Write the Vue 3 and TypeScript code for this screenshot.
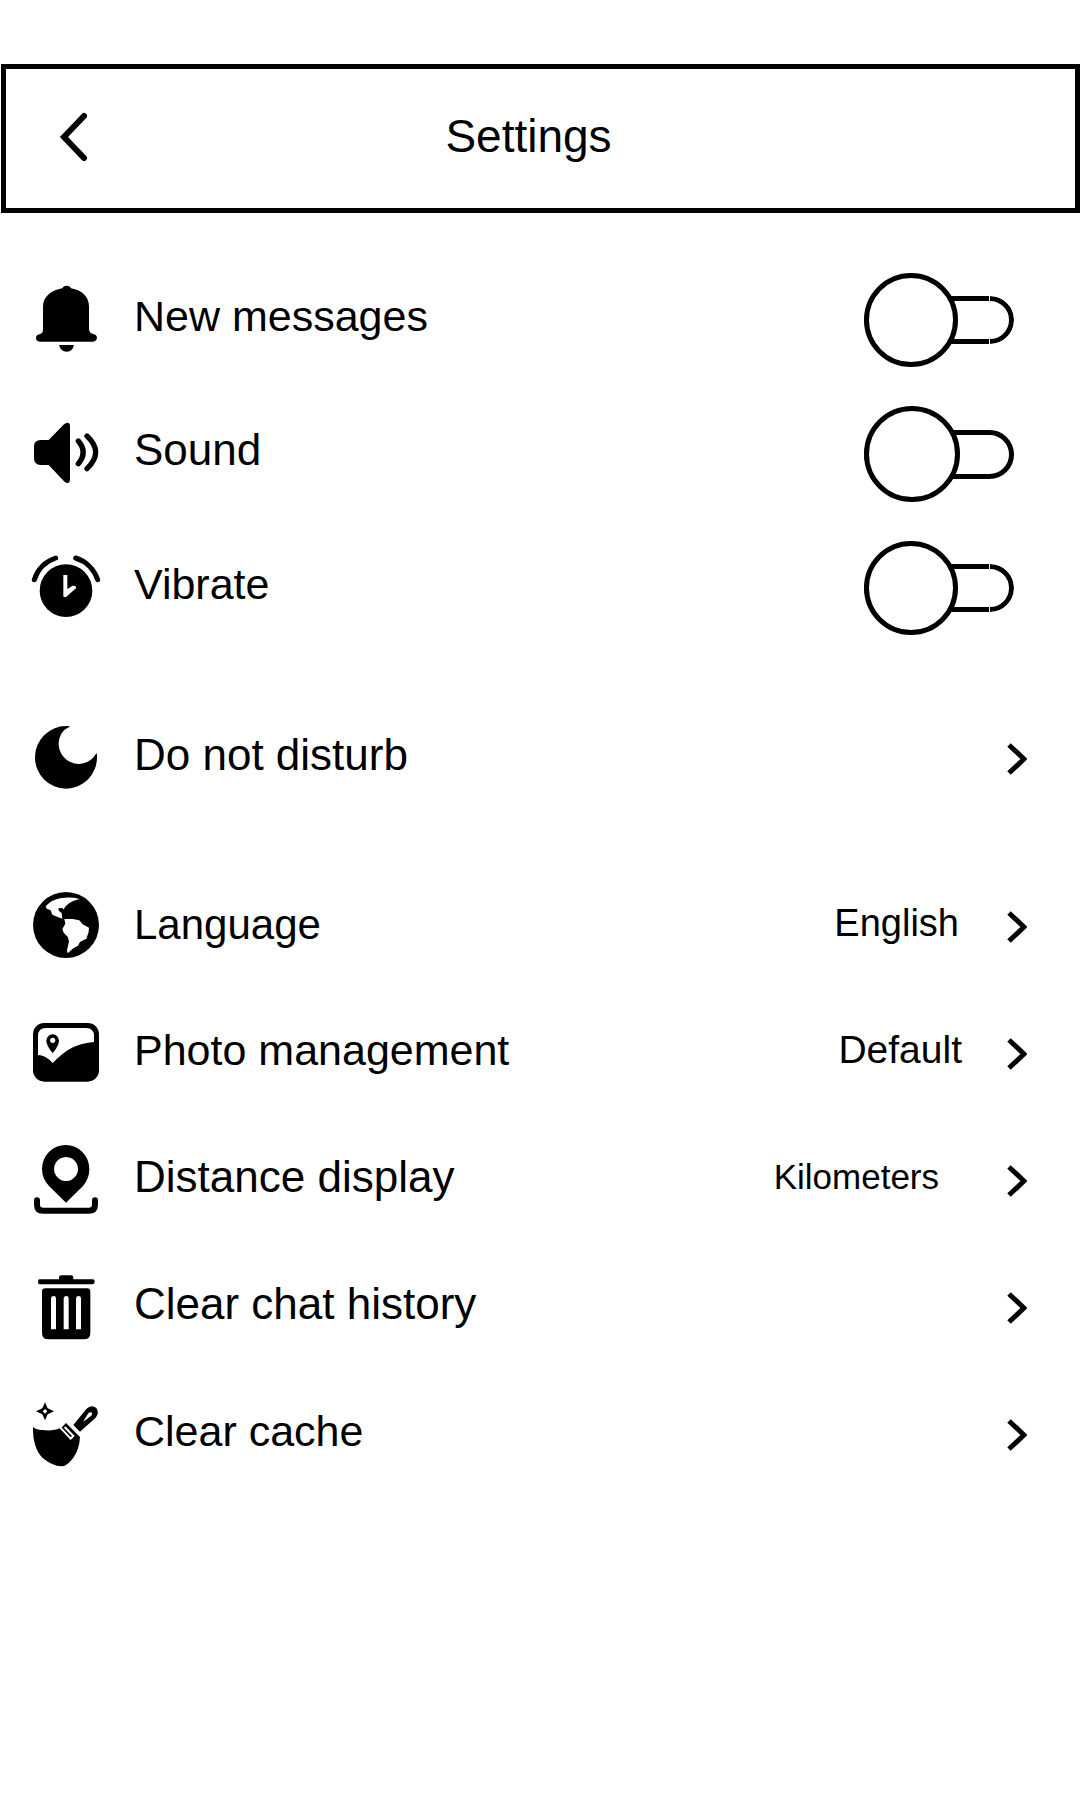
<script setup lang="ts">
import { reactive } from 'vue'

interface ToggleRow {
  id: string
  label: string
  labelClass?: string
  icon: string
  on: boolean
  large: boolean
}

interface LinkRow {
  id: string
  label: string
  labelClass?: string
  icon: string
  value?: string
  valueClass?: string
}

const toggles = reactive<ToggleRow[]>([
  { id: 'messages', label: 'New messages', icon: 'bell', on: false, large: false },
  { id: 'sound', label: 'Sound', labelClass: 'roomy', icon: 'speaker', on: false, large: true },
  { id: 'vibrate', label: 'Vibrate', icon: 'clock', on: false, large: false },
])

const groups: { id: string; rows: LinkRow[] }[] = [
  { id: 'quiet', rows: [{ id: 'dnd', label: 'Do not disturb', labelClass: 'roomy', icon: 'moon' }] },
  {
    id: 'general',
    rows: [
      { id: 'language', label: 'Language', labelClass: 'compact', icon: 'globe', value: 'English' },
      { id: 'photo', label: 'Photo management', icon: 'photo', value: 'Default', valueClass: 'wide' },
      { id: 'distance', label: 'Distance display', labelClass: 'roomy', icon: 'pin', value: 'Kilometers', valueClass: 'small' },
      { id: 'history', label: 'Clear chat history', labelClass: 'roomy', icon: 'trash' },
      { id: 'cache', label: 'Clear cache', icon: 'broom' },
    ],
  },
]

const viewBoxes: Record<string, string> = {
  bell: '30 42 216 216',
  speaker: '30 54 216 216',
  clock: '30 36 216 216',
  moon: '30 39 216 216',
  globe: '30 33 216 216',
  photo: '30 24 216 216',
  pin: '30 45 216 216',
  trash: '30 35 216 216',
  broom: '30 26 216 216',
}

const shapes: Record<string, string> = {
  bell: `<path d="M127 55q3-8 13-8t13 8C187 61 207 80 207 110V180q2 9 12 12q12 2 12 12q-2 11-14 11H62q-14 0-14-11q0-9 10-11q11-3 11-13V110C69 80 93 61 127 55ZM117 225H162Q158 245 140 245T117 225Z"/>`,
  speaker: `<path d="M62 120H86L132 73Q140 66 146 69Q150 71 150 78V240Q150 247 144 249Q138 250 132 244L86 195H62Q42 195 42 174V140Q42 120 62 120Z"/><path d="M175 123Q204 157 175 191M201 108Q253 157 201 206" fill="none" stroke="#000" stroke-width="16" stroke-linecap="round"/>`,
  clock: `<circle cx="138" cy="152" r="79"/><path d="M43 119A101 101 0 0 1 107 54M167 54A101 101 0 0 1 233 119" fill="none" stroke="#000" stroke-width="15" stroke-linecap="round"/><path d="M130 105H142V147L158 137Q171 136 168 145L139 170Q130 173 130 168Z" fill="#fff"/>`,
  moon: `<path d="M150 50Q150 48 138 48A93 94 0 1 0 231 142Q231 130 229 130A60 60 0 1 1 132 61Q138 55 150 50Z"/>`,
  globe: `<circle cx="138" cy="135" r="99"/><path d="M77 79Q92 60 124 54Q155 50 179 57Q156 63 147 70Q136 78 131 88L126 84L115 85L117 93L125 99L127 116L111 110L97 104L92 91L80 86ZM133 117L158 117L178 121L188 133L207 143L206 156L199 176L180 186L174 197L160 205L143 220L141 211L147 184L143 170L131 158L127 147L136 131Z" fill="#fff"/>`,
  photo: `<rect x="39" y="39" width="198" height="176" rx="34"/><path d="M54 135V78Q54 54 78 54H198Q222 54 222 78V96Q178 100 145 119Q123 133 98 159Q76 135 54 135Z" fill="#fff"/><path fill-rule="evenodd" d="M98 129Q79 107 79 92A19 19 0 0 1 117 92Q117 107 98 129ZM98 83a8 8 0 1 0 .1 0Z"/>`,
  pin: `<path fill-rule="evenodd" d="M138 218L87 168Q66 146 66 117A71 72 0 0 1 208 117Q208 146 189 168ZM138 81a36 36 0 1 0 .1 0Z"/><path d="M51 211V224Q51 242 70 242H206Q225 242 225 224V211" fill="none" stroke="#000" stroke-width="18" stroke-linecap="round"/>`,
  trash: `<path d="M60 57H117V51Q117 45 124 45H153Q160 45 160 51V57H218Q224 57 224 64T218 72H60Q54 72 54 64T60 57Z"/><path fill-rule="evenodd" d="M76 84H201Q211 84 211 94V217Q211 237 191 237H86Q66 237 66 217V94Q66 84 76 84ZM93 114V207H108V114Q108 107 101 107T93 114ZM131 114V207H146V114Q146 107 139 107T131 114ZM168 114V207H183V114Q183 107 176 107T168 114Z"/>`,
  broom: `<path fill-rule="evenodd" d="M75 36L83 54L102 63L83 72L75 90L67 72L48 63L67 54ZM75 56L68 63L75 70L82 63Z"/><path d="M39 110Q49 120 78 120Q104 121 118 114L124 112L138 98L180 140Q178 178 160 202Q141 228 124 228Q98 227 68 203Q38 174 39 110Z"/><path d="M121 112L152 145L160 137L134 110" fill="none" stroke="#fff" stroke-width="6"/><path fill-rule="evenodd" d="M160 104L199 56Q214 41 229 53Q239 67 227 82L180 124ZM189 95L214 76Q219 70 214 66Q209 65 205 69Z"/>`,
}
</script>

<template>
  <main class="screen">
    <header class="bar">
      <button class="back" type="button" aria-label="Back">
        <svg width="30" height="50" viewBox="0 0 30 50" aria-hidden="true">
          <path d="M25 4L5 25L25 46" fill="none" stroke="#000" stroke-width="6" stroke-linecap="round" />
        </svg>
      </button>
      <h1 class="title">Settings</h1>
    </header>

    <section class="group toggles">
      <label v-for="row in toggles" :key="row.id" class="row" :for="row.id">
        <svg class="icon" :viewBox="viewBoxes[row.icon]" aria-hidden="true" v-html="shapes[row.icon]"></svg>
        <span class="label" :class="row.labelClass">{{ row.label }}</span>
        <input
          :id="row.id"
          v-model="row.on"
          class="switch"
          :class="{ large: row.large }"
          type="checkbox"
          role="switch"
        />
      </label>
    </section>

    <nav v-for="group in groups" :key="group.id" class="group" :class="group.id">
      <a v-for="row in group.rows" :key="row.id" class="row" :href="'#' + row.id">
        <svg class="icon" :viewBox="viewBoxes[row.icon]" aria-hidden="true" v-html="shapes[row.icon]"></svg>
        <span class="label" :class="row.labelClass">{{ row.label }}</span>
        <span v-if="row.value" class="value" :class="row.valueClass">{{ row.value }}</span>
        <svg class="chevron" viewBox="0 0 20 32" aria-hidden="true">
          <path d="M2 2L17 16L2 30" fill="none" stroke="#000" stroke-width="5" />
        </svg>
      </a>
    </nav>
  </main>
</template>

<style>
body {
  margin: 0;
  background: #fff;
}
</style>

<style scoped>
.screen {
  box-sizing: border-box;
  min-height: 100vh;
  padding-top: 64px;
  background: #fff;
  color: #000;
  font-family: "Liberation Sans", Arial, sans-serif;
}

.bar {
  display: grid;
  grid-template-columns: 1fr auto 1fr;
  align-items: center;
  box-sizing: border-box;
  height: 149px;
  margin-left: 1px;
  padding: 0 24px 4px 0;
  border: 5px solid #000;
}

.back {
  justify-self: start;
  display: flex;
  margin-left: 53px;
  padding: 0;
  border: 0;
  background: none;
  cursor: pointer;
}

.title {
  margin: 0;
  padding-bottom: 2px;
  font-size: 46px;
  font-weight: 400;
  line-height: 52px;
}

.group {
  margin-top: 40px;
}

.general {
  margin-top: 41px;
}

.row {
  display: flex;
  align-items: center;
  height: 127px;
  padding: 0 53px 0 30px;
  color: inherit;
  text-decoration: none;
  cursor: pointer;
}

.toggles .row {
  height: 134px;
}

.icon {
  flex: none;
  width: 72px;
  height: 72px;
  margin-right: 32px;
}

.label {
  flex: 1;
  padding-bottom: 8px;
  font-size: 43px;
  line-height: 50px;
  white-space: nowrap;
}

.label.roomy {
  font-size: 44px;
}

.label.compact {
  padding-bottom: 4px;
  font-size: 42px;
}

.value {
  margin-right: 48px;
  padding-bottom: 8px;
  font-size: 38px;
  line-height: 44px;
}

.value.wide {
  margin-right: 45px;
  font-size: 39px;
}

.value.small {
  margin-right: 68px;
  font-size: 35px;
}

.chevron {
  flex: none;
  width: 20px;
  height: 32px;
}

.switch {
  --knob: 94px;
  --track: 48px;
  appearance: none;
  position: relative;
  display: flex;
  align-items: center;
  flex: none;
  width: 150px;
  height: 96px;
  margin: 0 13px 0 0;
  cursor: pointer;
}

.switch.large {
  --knob: 96px;
  --track: 49px;
}

.switch::before {
  content: "";
  box-sizing: border-box;
  width: 100%;
  height: var(--track);
  border: 5px solid #000;
  border-radius: 25px;
  -webkit-mask-image: linear-gradient(to left, #000 24px, transparent 24px, transparent 25px, #000 25px);
  mask-image: linear-gradient(to left, #000 24px, transparent 24px, transparent 25px, #000 25px);
}

.switch.large::before {
  -webkit-mask-image: none;
  mask-image: none;
}

.switch::after {
  content: "";
  position: absolute;
  left: 0;
  box-sizing: border-box;
  width: var(--knob);
  height: var(--knob);
  border: 5px solid #000;
  border-radius: 50%;
  background: #fff;
}

.switch:checked::after {
  right: 0;
  left: auto;
}
</style>
